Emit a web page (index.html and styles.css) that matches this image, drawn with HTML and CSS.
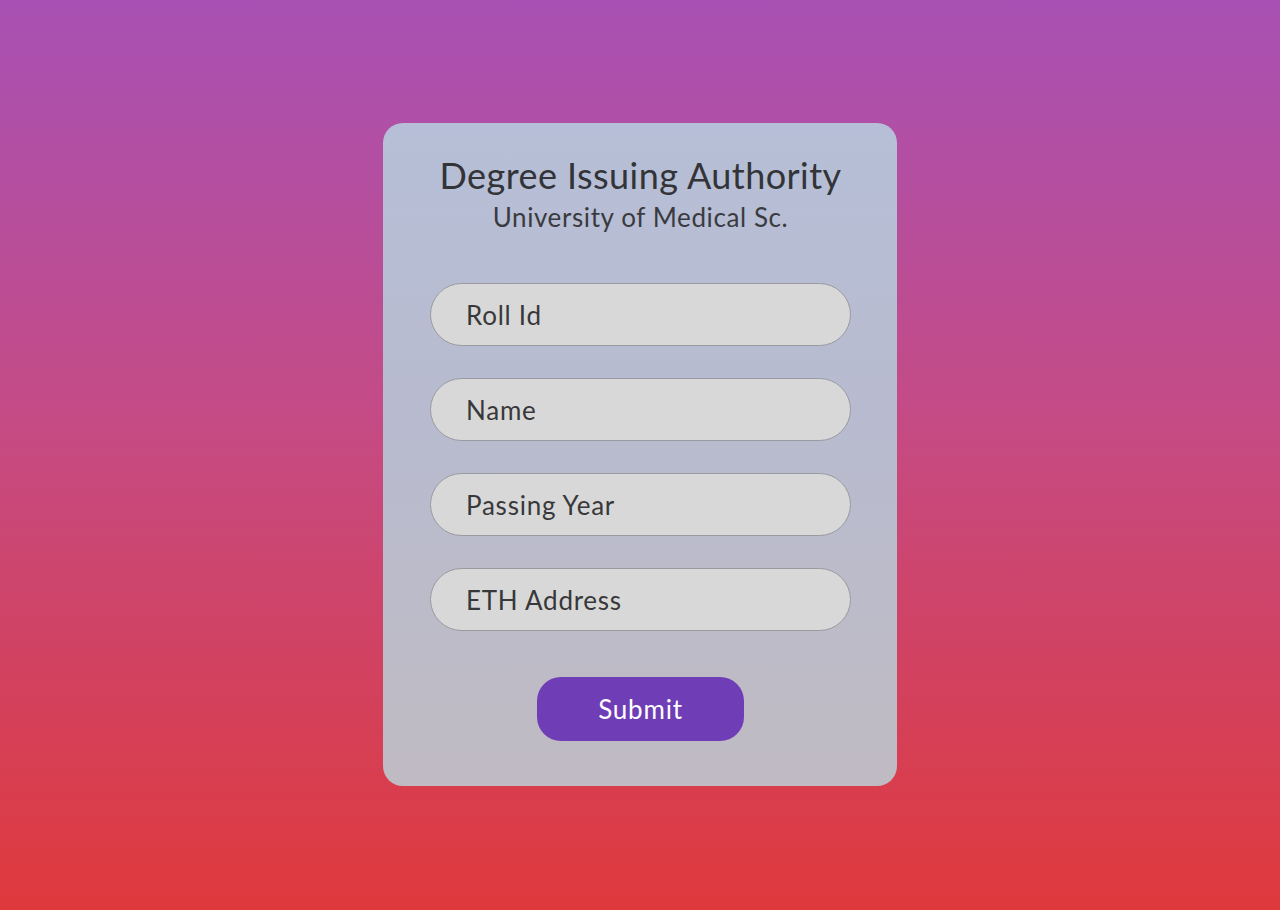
FILE: index.html
```html
<!DOCTYPE html>
<html lang="en">
<head>
<meta charset="utf-8">
<title>Degree Issuing Authority</title>
<link rel="stylesheet" href="styles.css">
</head>
<body>
<main class="page">
  <form class="card">
    <h1 class="title">Degree Issuing Authority</h1>
    <h2 class="subtitle">University of Medical Sc.</h2>
    <div class="fields">
      <input class="field" type="text" placeholder="Roll Id">
      <input class="field" type="text" placeholder="Name">
      <input class="field" type="text" placeholder="Passing Year">
      <input class="field" type="text" placeholder="ETH Address">
    </div>
    <button class="submit" type="button">Submit</button>
  </form>
</main>
</body>
</html>
```
FILE: styles.css
```css
html, body {
  margin: 0;
  padding: 0;
}
body {
  height: 910px;
  background: linear-gradient(180deg, #a851b4 0%, #c44b86 45%, #df393c 100%);
  font-family: Lato, "Noto Sans", sans-serif;
}
.page {
  height: 910px;
  box-sizing: border-box;
  padding-top: 123px;
  display: flex;
  align-items: flex-start;
  justify-content: center;
}
.card {
  width: 514px;
  box-sizing: border-box;
  padding: 28px 46px 45px 47px;
  border-radius: 20px;
  background: linear-gradient(180deg, #b6bfd7 0%, #b8bbcf 45%, #c0bbc3 100%);
  display: flex;
  flex-direction: column;
  align-items: center;
}
.title {
  margin: 0;
  font-size: 36px;
  line-height: 48px;
  font-weight: 400;
  letter-spacing: 0.45px;
  color: #333438;
}
.subtitle {
  margin: 0;
  font-size: 26px;
  line-height: 36px;
  font-weight: 400;
  letter-spacing: 0.6px;
  color: #3a3b40;
}
.fields {
  margin-top: 48px;
  align-self: stretch;
  display: flex;
  flex-direction: column;
  gap: 32px;
}
.field {
  height: 63px;
  box-sizing: border-box;
  border: 1px solid #999aa0;
  border-radius: 32px;
  background: #d8d8d8;
  padding: 0 0 0 35px;
  font-family: inherit;
  font-size: 26px;
  letter-spacing: 0.75px;
  color: #333;
  outline: none;
}
.field::placeholder {
  color: #38383a;
  opacity: 1;
}
.submit {
  margin-top: 46px;
  width: 207px;
  height: 64px;
  border: none;
  border-radius: 24px;
  background: #6f3db5;
  color: #fff;
  font-family: inherit;
  font-size: 26px;
  letter-spacing: 0.8px;
  cursor: pointer;
}
```
